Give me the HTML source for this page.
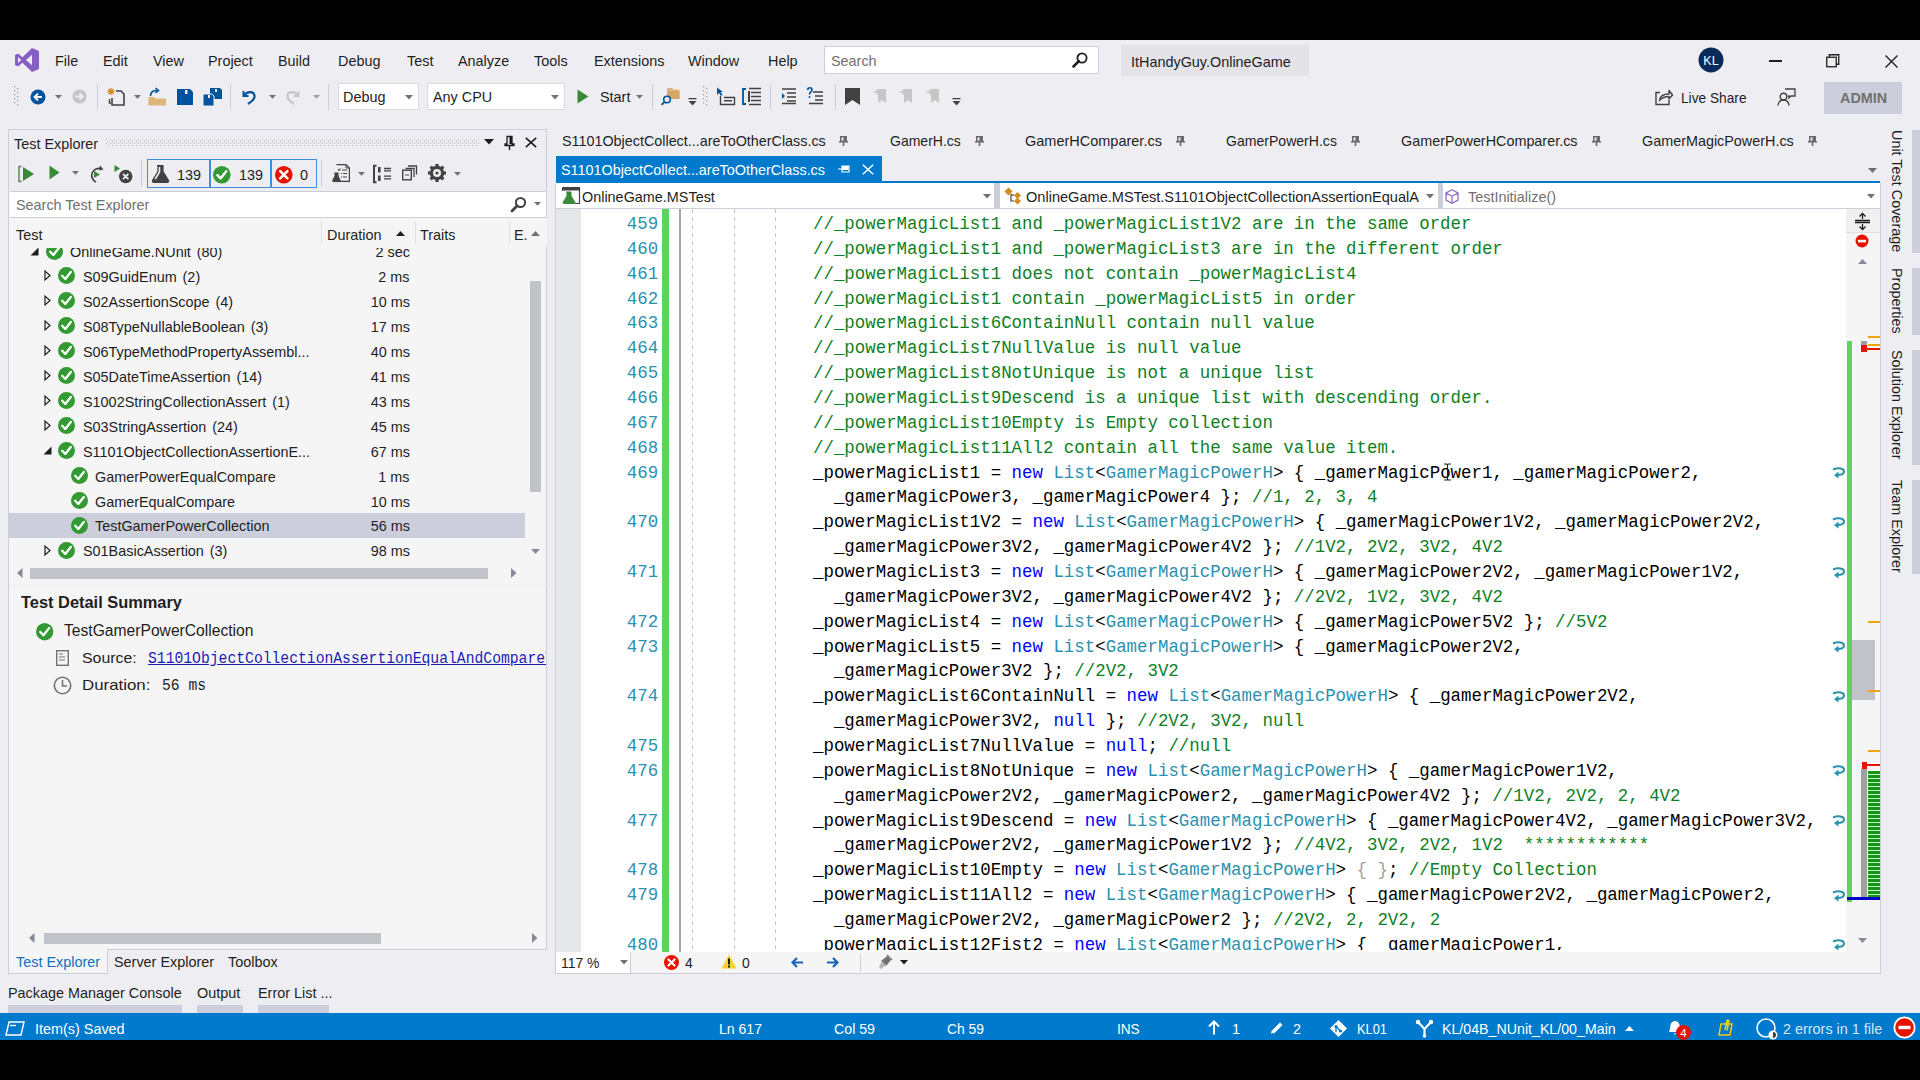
<!DOCTYPE html>
<html><head><meta charset="utf-8">
<style>
*{box-sizing:border-box;margin:0;padding:0}
html,body{width:1920px;height:1080px;overflow:hidden;background:#000}
body{position:relative;font-family:"Liberation Sans",sans-serif;font-size:15px;color:#1E1E1E}
.a{position:absolute}
svg.a{overflow:visible}
.t{position:absolute;white-space:pre;line-height:1}
.code{position:absolute;font-family:"Liberation Mono",monospace;font-size:19px;white-space:pre;line-height:24.864px;color:#000;transform:scaleX(0.91667);transform-origin:0 0}
.cm{color:#0E7F26}.kw{color:#0000FF}.ty{color:#2B91AF}.gr{color:#A0A0A0}
</style></head>
<body>
<div class="a" style="left:0px;top:0px;width:1920px;height:40px;background:#000;"></div>
<div class="a" style="left:0px;top:40px;width:1920px;height:1000px;background:#EEEEF2;"></div>
<div class="a" style="left:0px;top:1040px;width:1920px;height:40px;background:#000;"></div>
<svg class="a" style="left:15px;top:48px;" width="24" height="24" viewBox="0 0 24 24"><path fill-rule="evenodd" fill="#865FC5" d="M17,0 L24,3 L24,21 L17,24 L7.5,14.8 L3,18.5 L0,17 L0,7 L3,5.5 L7.5,9.2 Z M17,6.8 L11,12 L17,17.2 Z M3,9 L3,15 L6.2,12 Z"/></svg>
<div class="t" style="left:54.50px;top:53.30px;font-size:15px;color:#1E1E1E;transform:scaleX(0.96);transform-origin:0 0;">File</div>
<div class="t" style="left:102.50px;top:53.30px;font-size:15px;color:#1E1E1E;transform:scaleX(0.96);transform-origin:0 0;">Edit</div>
<div class="t" style="left:152.50px;top:53.30px;font-size:15px;color:#1E1E1E;transform:scaleX(0.96);transform-origin:0 0;">View</div>
<div class="t" style="left:208.00px;top:53.30px;font-size:15px;color:#1E1E1E;transform:scaleX(0.96);transform-origin:0 0;">Project</div>
<div class="t" style="left:278.00px;top:53.30px;font-size:15px;color:#1E1E1E;transform:scaleX(0.96);transform-origin:0 0;">Build</div>
<div class="t" style="left:337.50px;top:53.30px;font-size:15px;color:#1E1E1E;transform:scaleX(0.96);transform-origin:0 0;">Debug</div>
<div class="t" style="left:407.00px;top:53.30px;font-size:15px;color:#1E1E1E;transform:scaleX(0.96);transform-origin:0 0;">Test</div>
<div class="t" style="left:457.50px;top:53.30px;font-size:15px;color:#1E1E1E;transform:scaleX(0.96);transform-origin:0 0;">Analyze</div>
<div class="t" style="left:533.50px;top:53.30px;font-size:15px;color:#1E1E1E;transform:scaleX(0.96);transform-origin:0 0;">Tools</div>
<div class="t" style="left:593.50px;top:53.30px;font-size:15px;color:#1E1E1E;transform:scaleX(0.96);transform-origin:0 0;">Extensions</div>
<div class="t" style="left:687.50px;top:53.30px;font-size:15px;color:#1E1E1E;transform:scaleX(0.96);transform-origin:0 0;">Window</div>
<div class="t" style="left:767.50px;top:53.30px;font-size:15px;color:#1E1E1E;transform:scaleX(0.96);transform-origin:0 0;">Help</div>
<div class="a" style="left:824px;top:46px;width:275px;height:28px;background:#FFFFFF;border:1px solid #CCCEDB;"></div>
<div class="t" style="left:831.00px;top:53.30px;font-size:15px;color:#717171;transform:scaleX(0.96);transform-origin:0 0;">Search</div>
<svg class="a" style="left:1071px;top:51px;" width="18" height="18" viewBox="0 0 18 18"><circle cx="11" cy="7" r="4.6" fill="none" stroke="#1E1E1E" stroke-width="1.8"/><path d="M7.8,10.2 L2.5,15.5" stroke="#1E1E1E" stroke-width="2.6" stroke-linecap="round"/></svg>
<div class="a" style="left:1121px;top:45px;width:188px;height:31px;background:#E3E3E8;"></div>
<div class="t" style="left:1131.00px;top:54.30px;font-size:15px;color:#1E1E1E;transform:scaleX(0.96);transform-origin:0 0;">ItHandyGuy.OnlineGame</div>
<svg class="a" style="left:1698px;top:47px;" width="26" height="26" viewBox="0 0 26 26"><circle cx="13" cy="13" r="12.5" fill="#0B2A5C"/><text x="13" y="17.6" text-anchor="middle" font-family="Liberation Sans" font-size="12.5" fill="#fff">KL</text></svg>
<div class="a" style="left:1769px;top:60px;width:13px;height:1.5px;background:#1E1E1E;"></div>
<svg class="a" style="left:1826px;top:54px;" width="14" height="14" viewBox="0 0 14 14"><rect x="0.75" y="3.25" width="9.5" height="9.5" fill="none" stroke="#1E1E1E" stroke-width="1.3"/><path d="M3.25,3.25 V0.75 H12.75 V10.25 H10.25" fill="none" stroke="#1E1E1E" stroke-width="1.3"/></svg>
<svg class="a" style="left:1885px;top:55px;" width="13" height="13" viewBox="0 0 13 13"><path d="M0.5,0.5 L12.5,12.5 M12.5,0.5 L0.5,12.5" stroke="#1E1E1E" stroke-width="1.4"/></svg>
<svg class="a" style="left:13px;top:85px;" width="6" height="24" viewBox="0 0 6 24"><rect x="1" y="1" width="1.3" height="1.3" fill="#A0A0A0"/><rect x="4" y="3" width="1.3" height="1.3" fill="#A0A0A0"/><rect x="1" y="5" width="1.3" height="1.3" fill="#A0A0A0"/><rect x="4" y="7" width="1.3" height="1.3" fill="#A0A0A0"/><rect x="1" y="9" width="1.3" height="1.3" fill="#A0A0A0"/><rect x="4" y="11" width="1.3" height="1.3" fill="#A0A0A0"/><rect x="1" y="13" width="1.3" height="1.3" fill="#A0A0A0"/><rect x="4" y="15" width="1.3" height="1.3" fill="#A0A0A0"/><rect x="1" y="17" width="1.3" height="1.3" fill="#A0A0A0"/><rect x="4" y="19" width="1.3" height="1.3" fill="#A0A0A0"/></svg>
<svg class="a" style="left:30px;top:89px;" width="16" height="16" viewBox="0 0 16 16"><circle cx="8" cy="8" r="7.5" fill="#00539C"/><path d="M12,8 H5 M8,4.6 L4.6,8 L8,11.4" fill="none" stroke="#fff" stroke-width="2"/></svg>
<svg class="a" style="left:55.0px;top:95.075px;" width="7" height="3.8500000000000005" viewBox="0 0 7 3.8500000000000005"><path d="M0,0 L7,0 L3.5,3.8500000000000005 Z" fill="#717171"/></svg>
<svg class="a" style="left:72px;top:89px;" width="15" height="15" viewBox="0 0 15 15"><circle cx="7.5" cy="7.5" r="7" fill="#C6C6C6"/><path d="M3.5,7.5 H10.5 M7.5,4.3 L10.7,7.5 L7.5,10.7" fill="none" stroke="#EEEEF2" stroke-width="2"/></svg>
<div class="a" style="left:97px;top:84px;width:1px;height:26px;background:#CCCEDB;"></div>
<svg class="a" style="left:107px;top:87px;" width="19" height="19" viewBox="0 0 19 19"><path d="M4,1 L4,8 M0.5,4.5 L7.5,4.5 M1.5,2 L6.5,7 M6.5,2 L1.5,7" stroke="#D28C1E" stroke-width="1.3"/><path d="M9,4 H14 L17,7 V18 H5 V11" fill="none" stroke="#424242" stroke-width="1.6"/><path d="M2.5,12 V16 H4" stroke="#424242" stroke-width="1.4" fill="none"/></svg>
<svg class="a" style="left:134.0px;top:95.075px;" width="7" height="3.8500000000000005" viewBox="0 0 7 3.8500000000000005"><path d="M0,0 L7,0 L3.5,3.8500000000000005 Z" fill="#717171"/></svg>
<svg class="a" style="left:148px;top:88px;" width="19" height="18" viewBox="0 0 19 18"><path d="M0.5,9 H6 L7.5,10.5 H18 V17.5 H0.5 Z" fill="#DCB67A"/><path d="M2.5,8 C2.5,4 5,2.5 9,2.5" fill="none" stroke="#00539C" stroke-width="1.6"/><path d="M7.5,0 L10.5,2.5 L7.5,5" fill="none" stroke="#00539C" stroke-width="1.6"/></svg>
<svg class="a" style="left:177px;top:89px;" width="16" height="16" viewBox="0 0 16 16"><path d="M0,0 H13 L16,3 V16 H0 Z" fill="#00539C"/><rect x="8" y="1" width="2.5" height="4" fill="#EEEEF2"/><rect x="3" y="10" width="10" height="6" fill="#00539C"/></svg>
<svg class="a" style="left:203px;top:88px;" width="19" height="18" viewBox="0 0 19 18"><path d="M7,0 H17 L19,2 V11 H7 Z" fill="#00539C"/><rect x="12" y="1" width="2" height="3" fill="#EEEEF2"/><path d="M0,6 H9 L11,8 V18 H0 Z" fill="#00539C" stroke="#EEEEF2" stroke-width="1"/><rect x="5" y="7" width="2" height="3" fill="#EEEEF2"/></svg>
<div class="a" style="left:230px;top:84px;width:1px;height:26px;background:#CCCEDB;"></div>
<svg class="a" style="left:241px;top:88px;" width="16" height="17" viewBox="0 0 16 17"><path d="M2.5,3 V8 H7.5" fill="none" stroke="#00539C" stroke-width="2"/><path d="M3,7.5 C6,3 13,3 13.5,8 C14,11 11,13 7,16" fill="none" stroke="#00539C" stroke-width="2.2"/></svg>
<svg class="a" style="left:269.0px;top:95.075px;" width="7" height="3.8500000000000005" viewBox="0 0 7 3.8500000000000005"><path d="M0,0 L7,0 L3.5,3.8500000000000005 Z" fill="#717171"/></svg>
<svg class="a" style="left:285px;top:88px;" width="16" height="17" viewBox="0 0 16 17"><path d="M13.5,3 V8 H8.5" fill="none" stroke="#C6C6C6" stroke-width="2"/><path d="M13,7.5 C10,3 3,3 2.5,8 C2,11 5,13 9,16" fill="none" stroke="#C6C6C6" stroke-width="2.2"/></svg>
<svg class="a" style="left:312.5px;top:95.075px;" width="7" height="3.8500000000000005" viewBox="0 0 7 3.8500000000000005"><path d="M0,0 L7,0 L3.5,3.8500000000000005 Z" fill="#A0A0A0"/></svg>
<div class="a" style="left:328px;top:84px;width:1px;height:26px;background:#CCCEDB;"></div>
<div class="a" style="left:338px;top:83px;width:81px;height:27px;background:#FFFFFF;border:1px solid #D9DAE3;"></div>
<div class="t" style="left:343.00px;top:89.30px;font-size:15px;color:#1E1E1E;transform:scaleX(0.96);transform-origin:0 0;">Debug</div>
<svg class="a" style="left:405.0px;top:94.8px;" width="8" height="4.4" viewBox="0 0 8 4.4"><path d="M0,0 L8,0 L4.0,4.4 Z" fill="#717171"/></svg>
<div class="a" style="left:427px;top:83px;width:138px;height:27px;background:#FFFFFF;border:1px solid #D9DAE3;"></div>
<div class="t" style="left:432.50px;top:89.30px;font-size:15px;color:#1E1E1E;transform:scaleX(0.96);transform-origin:0 0;">Any CPU</div>
<svg class="a" style="left:551.0px;top:94.8px;" width="8" height="4.4" viewBox="0 0 8 4.4"><path d="M0,0 L8,0 L4.0,4.4 Z" fill="#717171"/></svg>
<svg class="a" style="left:577px;top:89px;" width="12" height="15" viewBox="0 0 12 15"><path d="M0.5,0.5 L11.5,7.5 L0.5,14.5 Z" fill="#388A34"/></svg>
<div class="t" style="left:599.50px;top:89.30px;font-size:15px;color:#1E1E1E;transform:scaleX(0.96);transform-origin:0 0;">Start</div>
<svg class="a" style="left:636.0px;top:95.075px;" width="7" height="3.8500000000000005" viewBox="0 0 7 3.8500000000000005"><path d="M0,0 L7,0 L3.5,3.8500000000000005 Z" fill="#717171"/></svg>
<div class="a" style="left:651.5px;top:84px;width:1px;height:26px;background:#CCCEDB;"></div>
<svg class="a" style="left:661px;top:87px;" width="19" height="19" viewBox="0 0 19 19"><path d="M6,1 H11 L12.5,2.5 H18.5 V12 H6 Z" fill="#DCB67A"/><path d="M6,4 H18.5 V12 H6 Z" fill="#C99A4F" opacity="0.5"/><circle cx="6" cy="12.5" r="3.3" fill="#EEEEF2" stroke="#00539C" stroke-width="1.6"/><path d="M3.6,14.9 L0.6,17.9" stroke="#00539C" stroke-width="2"/></svg>
<svg class="a" style="left:688px;top:98px;" width="9" height="9" viewBox="0 0 9 9"><rect x="0.5" y="0" width="8" height="1.3" fill="#424242"/><path d="M0.5,3 H8.5 L4.5,7.5 Z" fill="#424242"/></svg>
<svg class="a" style="left:702px;top:85px;" width="6" height="24" viewBox="0 0 6 24"><rect x="1" y="1" width="1.3" height="1.3" fill="#A0A0A0"/><rect x="4" y="3" width="1.3" height="1.3" fill="#A0A0A0"/><rect x="1" y="5" width="1.3" height="1.3" fill="#A0A0A0"/><rect x="4" y="7" width="1.3" height="1.3" fill="#A0A0A0"/><rect x="1" y="9" width="1.3" height="1.3" fill="#A0A0A0"/><rect x="4" y="11" width="1.3" height="1.3" fill="#A0A0A0"/><rect x="1" y="13" width="1.3" height="1.3" fill="#A0A0A0"/><rect x="4" y="15" width="1.3" height="1.3" fill="#A0A0A0"/><rect x="1" y="17" width="1.3" height="1.3" fill="#A0A0A0"/><rect x="4" y="19" width="1.3" height="1.3" fill="#A0A0A0"/></svg>
<svg class="a" style="left:716px;top:87px;" width="19" height="19" viewBox="0 0 19 19"><path d="M1,0.5 L1,8 L3,6 L5,9 L6.5,8 L4.5,5 L7,5 Z" fill="#00539C"/><path d="M4.5,9 V17.5 H18.5 V10.5 H8" fill="none" stroke="#424242" stroke-width="1.4"/><rect x="8" y="13" width="8" height="1.5" fill="#424242"/></svg>
<svg class="a" style="left:742px;top:87px;" width="20" height="19" viewBox="0 0 20 19"><path d="M4,2 H1 V17 H4" fill="none" stroke="#00539C" stroke-width="1.8"/><path d="M7,1.5 H19 M9,5.5 H19 M9,9.5 H19 M9,13.5 H19 M7,17.5 H19" stroke="#424242" stroke-width="1.5"/><rect x="6" y="4" width="2" height="11" fill="#424242"/></svg>
<div class="a" style="left:770px;top:84px;width:1px;height:26px;background:#CCCEDB;"></div>
<svg class="a" style="left:782px;top:88px;" width="15" height="16" viewBox="0 0 15 16"><path d="M0,1 H14 M5,5 H14 M5,9 H14 M5,13 H14 M0,15.5 H14" stroke="#424242" stroke-width="1.5"/><path d="M0,5 L3,8 L0,11 Z" fill="#00539C"/></svg>
<svg class="a" style="left:806px;top:87px;" width="17" height="17" viewBox="0 0 17 17"><path d="M1.5,3 C2,0 6,0 6,3 C6,5 3.5,5 3.5,7.5" fill="none" stroke="#00539C" stroke-width="1.6"/><circle cx="3.5" cy="10" r="1" fill="#00539C"/><path d="M7,5 H17 M9,9 H17 M9,13 H17 M3,16.5 H17" stroke="#424242" stroke-width="1.5"/></svg>
<div class="a" style="left:834.5px;top:84px;width:1px;height:26px;background:#CCCEDB;"></div>
<svg class="a" style="left:845px;top:88px;" width="15" height="17" viewBox="0 0 15 17"><path d="M0,0 H15 V17 L7.5,12 L0,17 Z" fill="#424242"/></svg>
<svg class="a" style="left:873px;top:88px;" width="16" height="16" viewBox="0 0 16 16"><path d="M5,1 H13 V15 L9,12 L5,15 Z" fill="#C6C6C6"/><path d="M0.5,4 H6 M3.5,1.5 L6,4 L3.5,6.5" stroke="#C6C6C6" stroke-width="1.5" fill="none"/></svg>
<svg class="a" style="left:899px;top:88px;" width="16" height="16" viewBox="0 0 16 16"><path d="M5,1 H13 V15 L9,12 L5,15 Z" fill="#C6C6C6"/><path d="M0.5,4 H6 M3.5,1.5 L6,4 L3.5,6.5" stroke="#C6C6C6" stroke-width="1.5" fill="none"/></svg>
<svg class="a" style="left:926px;top:88px;" width="16" height="16" viewBox="0 0 16 16"><path d="M5,1 H13 V15 L9,12 L5,15 Z" fill="#C6C6C6"/><path d="M0.5,4 H6 M3.5,1.5 L6,4 L3.5,6.5" stroke="#C6C6C6" stroke-width="1.5" fill="none"/></svg>
<svg class="a" style="left:952px;top:98px;" width="9" height="9" viewBox="0 0 9 9"><rect x="0.5" y="0" width="8" height="1.3" fill="#424242"/><path d="M0.5,3 H8.5 L4.5,7.5 Z" fill="#424242"/></svg>
<svg class="a" style="left:1655px;top:88px;" width="18" height="18" viewBox="0 0 18 18"><path d="M5,4.5 H1 V16.5 H14 V12" fill="none" stroke="#424242" stroke-width="1.4"/><path d="M4.5,12.5 C5,7.5 9,6 14,6 V2.5 L17.5,7 L14,11 V8.5 C10,8.5 7,9.5 4.5,12.5 Z" fill="none" stroke="#424242" stroke-width="1.4" stroke-linejoin="round"/></svg>
<div class="t" id="f0" style="left:1680.50px;top:90.30px;font-size:15px;color:#1E1E1E;transform:scaleX(0.9133);transform-origin:0 0;">Live Share</div>
<svg class="a" style="left:1777px;top:88px;" width="19" height="19" viewBox="0 0 19 19"><circle cx="6.5" cy="8.5" r="3.3" fill="none" stroke="#424242" stroke-width="1.4"/><path d="M0.8,17.5 C1.5,13 4,12 6.5,12 C9,12 11.5,13 12,17.5" fill="none" stroke="#424242" stroke-width="1.4"/><path d="M8,1 H18 V8 H14 L12,10 V8 H11" fill="none" stroke="#424242" stroke-width="1.3"/></svg>
<div class="a" style="left:1824px;top:82px;width:78px;height:32px;background:#CCCEDB;"></div>
<div class="t" style="left:1839.50px;top:90.30px;font-size:15px;color:#717171;font-weight:bold;transform:scaleX(0.96);transform-origin:0 0;">ADMIN</div>
<div class="a" style="left:8px;top:129px;width:539px;height:821px;background:#F5F5F5;border:1px solid #CCCEDB;"></div>
<div class="a" style="left:9px;top:130px;width:537px;height:61px;background:#EEEEF2;"></div>
<div class="t" style="left:14.00px;top:136.29px;font-size:15px;color:#1E1E1E;transform:scaleX(0.96);transform-origin:0 0;">Test Explorer</div>
<svg class="a" style="left:106px;top:139px;" width="374" height="8" viewBox="0 0 374 8"><defs><pattern id="gp" width="4" height="4" patternUnits="userSpaceOnUse"><rect x="0" y="0" width="1" height="1" fill="#B0B0B8"/><rect x="2" y="2" width="1" height="1" fill="#B0B0B8"/></pattern></defs><rect width="374" height="8" fill="url(#gp)"/></svg>
<svg class="a" style="left:484.0px;top:139.25px;" width="10" height="5.5" viewBox="0 0 10 5.5"><path d="M0,0 L10,0 L5.0,5.5 Z" fill="#1E1E1E"/></svg>
<svg class="a" style="left:504px;top:136px;" width="11" height="14" viewBox="0 0 11 14"><path d="M3,0.5 H8 V8 H10 V9.5 H1 V8 H3 Z" fill="none" stroke="#1E1E1E" stroke-width="1.3"/><path d="M5.5,9.5 V14" stroke="#1E1E1E" stroke-width="1.4"/><rect x="5.5" y="1" width="2.5" height="7" fill="#1E1E1E"/></svg>
<svg class="a" style="left:525px;top:137px;" width="12" height="11" viewBox="0 0 12 11"><path d="M0.8,0.8 L11.2,10.2 M11.2,0.8 L0.8,10.2" stroke="#1E1E1E" stroke-width="1.6"/></svg>
<svg class="a" style="left:18px;top:166px;" width="17" height="16" viewBox="0 0 17 16"><path d="M3.5,0.5 H1 V15.5 H3.5" fill="none" stroke="#5B7A56" stroke-width="1.4"/><path d="M5,1 L16,8 L5,15 Z" fill="#388A34"/></svg>
<svg class="a" style="left:49px;top:165px;" width="11" height="15" viewBox="0 0 11 15"><path d="M0.5,0.5 L10.5,7.5 L0.5,14.5 Z" fill="#388A34"/></svg>
<svg class="a" style="left:72.2px;top:171.075px;" width="7" height="3.8500000000000005" viewBox="0 0 7 3.8500000000000005"><path d="M0,0 L7,0 L3.5,3.8500000000000005 Z" fill="#717171"/></svg>
<svg class="a" style="left:87px;top:165px;" width="18" height="18" viewBox="0 0 18 18"><path d="M14.5,4 A7,7 0 1 0 9,17" fill="none" stroke="#424242" stroke-width="1.6"/><path d="M13,0.5 L16.5,4.5 L12,5.5 Z" fill="#424242"/><path d="M7,6 L13,9.5 L7,13 Z" fill="#388A34"/></svg>
<svg class="a" style="left:114px;top:165px;" width="19" height="19" viewBox="0 0 19 19"><path d="M0.5,0 L6,3.5 L0.5,7 Z" fill="#388A34"/><circle cx="11.7" cy="11.5" r="6.7" fill="#424242"/><path d="M9,8.8 L14.4,14.2 M14.4,8.8 L9,14.2" stroke="#EEEEF2" stroke-width="1.8"/></svg>
<div class="a" style="left:141px;top:160px;width:1px;height:26px;background:#CCCEDB;"></div>
<div class="a" style="left:147px;top:159px;width:170px;height:29px;border:1.5px solid #3D8EE0;"></div>
<div class="a" style="left:208.5px;top:159px;width:2px;height:29px;background:#3D8EE0;"></div>
<div class="a" style="left:270px;top:159px;width:2px;height:29px;background:#3D8EE0;"></div>
<svg class="a" style="left:152px;top:165px;" width="17" height="18" viewBox="0 0 17 18"><path d="M5,0.5 H11.5 M6,1 V6.5 L0.5,15.5 Q0,17.5 2,17.5 H15 Q17,17.5 16.5,15.5 L11,6.5 V1" fill="#424242" stroke="#424242" stroke-width="1.2"/><path d="M7.5,2 V7 L3.2,14" fill="none" stroke="#EEEEF2" stroke-width="1.6"/></svg>
<div class="t" style="left:176.50px;top:167.29px;font-size:15px;color:#1E1E1E;transform:scaleX(0.96);transform-origin:0 0;">139</div>
<svg class="a" style="left:213.2px;top:165.5px;" width="17.6" height="17.6" viewBox="0 0 17.6 17.6"><g transform="scale(1.0353)"><circle cx="8.5" cy="8.5" r="8.5" fill="#339933"/><path d="M4.2,8.8 L7.3,12 L12.8,5" fill="none" stroke="#fff" stroke-width="2.3" stroke-linecap="round" stroke-linejoin="round"/></g></svg>
<div class="t" style="left:239.00px;top:167.29px;font-size:15px;color:#1E1E1E;transform:scaleX(0.96);transform-origin:0 0;">139</div>
<svg class="a" style="left:275.2px;top:165.7px;" width="17.6" height="17.6" viewBox="0 0 17.6 17.6"><g transform="scale(1.0353)"><circle cx="8.5" cy="8.5" r="8.5" fill="#E51400"/><path d="M5,5 L12,12 M12,5 L5,12" stroke="#fff" stroke-width="2.4" stroke-linecap="round"/></g></svg>
<div class="t" style="left:300.00px;top:167.29px;font-size:15px;color:#1E1E1E;transform:scaleX(0.96);transform-origin:0 0;">0</div>
<div class="a" style="left:321px;top:160px;width:1px;height:26px;background:#CCCEDB;"></div>
<svg class="a" style="left:332px;top:164px;" width="19" height="19" viewBox="0 0 19 19"><path d="M4.6,0.6 H14 L17.4,4 V17.4 H7" fill="#EEEEF2" stroke="#424242" stroke-width="1.2"/><path d="M14,0.6 V4 H17.4" fill="none" stroke="#424242" stroke-width="1"/><path d="M6,5.5 L7,6.5 L8.5,4.5 M10,6 H15 M9,9.5 H10 M11,9.5 H15 M9,13 H10 M11,13 H15" fill="none" stroke="#424242" stroke-width="1.1"/><path d="M2.3,9 H6.5 M3,9 V12 L0.6,16.5 Q0.4,17.6 1.5,17.6 H7.5 Q8.6,17.6 8.3,16.5 L6,12 V9" fill="#424242" stroke="#424242" stroke-width="1"/></svg>
<svg class="a" style="left:357.5px;top:172.075px;" width="7" height="3.8500000000000005" viewBox="0 0 7 3.8500000000000005"><path d="M0,0 L7,0 L3.5,3.8500000000000005 Z" fill="#717171"/></svg>
<svg class="a" style="left:373px;top:165px;" width="19" height="18" viewBox="0 0 19 18"><path d="M3.5,0.8 H1 V17.2 H3.5" fill="none" stroke="#424242" stroke-width="2"/><rect x="5" y="2" width="2.6" height="5.5" fill="#424242"/><rect x="5" y="10.5" width="2.6" height="5.5" fill="#424242"/><path d="M11,3.5 H18 M11,5.8 H18 M11,11.2 H18 M11,13.8 H18" stroke="#424242" stroke-width="1.3"/></svg>
<svg class="a" style="left:402px;top:165px;" width="16" height="16" viewBox="0 0 16 16"><path d="M6,1 H14.5 V9.5" fill="none" stroke="#424242" stroke-width="1.3"/><path d="M3.5,3.5 H12 V12" fill="none" stroke="#424242" stroke-width="1.3"/><rect x="0.7" y="5.2" width="8.6" height="9.6" fill="#EEEEF2" stroke="#424242" stroke-width="1.4"/><path d="M3,10 H7" stroke="#717171" stroke-width="1.3"/></svg>
<svg class="a" style="left:428px;top:164px;" width="18" height="18" viewBox="0 0 18 18"><g transform="translate(9,9)"><rect x="-1.6" y="-9" width="3.2" height="4" fill="#424242" transform="rotate(0)"/><rect x="-1.6" y="-9" width="3.2" height="4" fill="#424242" transform="rotate(45)"/><rect x="-1.6" y="-9" width="3.2" height="4" fill="#424242" transform="rotate(90)"/><rect x="-1.6" y="-9" width="3.2" height="4" fill="#424242" transform="rotate(135)"/><rect x="-1.6" y="-9" width="3.2" height="4" fill="#424242" transform="rotate(180)"/><rect x="-1.6" y="-9" width="3.2" height="4" fill="#424242" transform="rotate(225)"/><rect x="-1.6" y="-9" width="3.2" height="4" fill="#424242" transform="rotate(270)"/><rect x="-1.6" y="-9" width="3.2" height="4" fill="#424242" transform="rotate(315)"/><circle r="5.6" fill="none" stroke="#424242" stroke-width="3.2"/><circle r="1.6" fill="#424242"/></g></svg>
<svg class="a" style="left:453.5px;top:172.075px;" width="7" height="3.8500000000000005" viewBox="0 0 7 3.8500000000000005"><path d="M0,0 L7,0 L3.5,3.8500000000000005 Z" fill="#717171"/></svg>
<div class="a" style="left:10px;top:191px;width:536px;height:27px;background:#FFFFFF;border-top:1px solid #CCCEDB;border-bottom:1px solid #CCCEDB;"></div>
<div class="t" style="left:15.50px;top:197.29px;font-size:15px;color:#717171;transform:scaleX(0.96);transform-origin:0 0;">Search Test Explorer</div>
<svg class="a" style="left:510px;top:196px;" width="17" height="17" viewBox="0 0 17 17"><circle cx="10.5" cy="6.5" r="4.6" fill="none" stroke="#424242" stroke-width="2"/><path d="M7.2,9.8 L2,15" stroke="#424242" stroke-width="2.8" stroke-linecap="round"/></svg>
<svg class="a" style="left:533.5px;top:202.075px;" width="7" height="3.8500000000000005" viewBox="0 0 7 3.8500000000000005"><path d="M0,0 L7,0 L3.5,3.8500000000000005 Z" fill="#717171"/></svg>
<div class="a" style="left:9px;top:218px;width:538px;height:28px;background:#F5F5F5;"></div>
<div class="t" style="left:16.00px;top:227.29px;font-size:15px;color:#1E1E1E;transform:scaleX(0.96);transform-origin:0 0;">Test</div>
<div class="a" style="left:321px;top:221px;width:1px;height:24px;background:#E0E0E6;"></div>
<div class="t" style="left:327.00px;top:227.29px;font-size:15px;color:#1E1E1E;transform:scaleX(0.96);transform-origin:0 0;">Duration</div>
<svg class="a" style="left:396.0px;top:230.525px;" width="9" height="4.95" viewBox="0 0 9 4.95"><path d="M0,4.95 L9,4.95 L4.5,0 Z" fill="#1E1E1E"/></svg>
<div class="a" style="left:415px;top:221px;width:1px;height:24px;background:#E0E0E6;"></div>
<div class="t" style="left:420.00px;top:227.29px;font-size:15px;color:#1E1E1E;transform:scaleX(0.96);transform-origin:0 0;">Traits</div>
<div class="a" style="left:509px;top:221px;width:1px;height:24px;background:#E0E0E6;"></div>
<div class="t" style="left:514.00px;top:227.29px;font-size:15px;color:#1E1E1E;transform:scaleX(0.96);transform-origin:0 0;">E.</div>
<svg class="a" style="left:530.5px;top:230.525px;" width="9" height="4.95" viewBox="0 0 9 4.95"><path d="M0,4.95 L9,4.95 L4.5,0 Z" fill="#717171"/></svg>
<div class="a" style="left:9px;top:247.5px;width:516px;height:315.5px;overflow:hidden">
<svg class="a" style="left:20.5px;top:-1.0px;" width="9" height="9" viewBox="0 0 9 9"><path d="M8.5,0.5 L8.5,8.5 L0.5,8.5 Z" fill="#1E1E1E"/></svg>
<svg class="a" style="left:36.5px;top:-5.0px;" width="17.0" height="17.0" viewBox="0 0 17.0 17.0"><g transform="scale(1.0000)"><circle cx="8.5" cy="8.5" r="8.5" fill="#339933"/><path d="M4.2,8.8 L7.3,12 L12.8,5" fill="none" stroke="#fff" stroke-width="2.3" stroke-linecap="round" stroke-linejoin="round"/></g></svg>
<div class="t" style="left:61.20px;top:-3.21px;font-size:15px;color:#1E1E1E;word-spacing:2px;transform:scaleX(0.96);transform-origin:0 0;">OnlineGame.NUnit (80)</div>
<div class="t" style="right:115.50px;top:-3.21px;font-size:15px;color:#1E1E1E;transform:scaleX(0.96);transform-origin:100% 0;">2 sec</div>
<svg class="a" style="left:35.0px;top:22.920000000000016px;" width="7" height="11" viewBox="0 0 7 11"><path d="M1,1 L1,10 L6,5.5 Z" fill="none" stroke="#1E1E1E" stroke-width="1.2"/></svg>
<svg class="a" style="left:49.2px;top:19.920000000000016px;" width="17.0" height="17.0" viewBox="0 0 17.0 17.0"><g transform="scale(1.0000)"><circle cx="8.5" cy="8.5" r="8.5" fill="#339933"/><path d="M4.2,8.8 L7.3,12 L12.8,5" fill="none" stroke="#fff" stroke-width="2.3" stroke-linecap="round" stroke-linejoin="round"/></g></svg>
<div class="t" style="left:74.00px;top:21.72px;font-size:15px;color:#1E1E1E;word-spacing:2px;transform:scaleX(0.96);transform-origin:0 0;">S09GuidEnum (2)</div>
<div class="t" style="right:115.50px;top:21.72px;font-size:15px;color:#1E1E1E;transform:scaleX(0.96);transform-origin:100% 0;">2 ms</div>
<svg class="a" style="left:35.0px;top:47.84000000000003px;" width="7" height="11" viewBox="0 0 7 11"><path d="M1,1 L1,10 L6,5.5 Z" fill="none" stroke="#1E1E1E" stroke-width="1.2"/></svg>
<svg class="a" style="left:49.2px;top:44.84000000000003px;" width="17.0" height="17.0" viewBox="0 0 17.0 17.0"><g transform="scale(1.0000)"><circle cx="8.5" cy="8.5" r="8.5" fill="#339933"/><path d="M4.2,8.8 L7.3,12 L12.8,5" fill="none" stroke="#fff" stroke-width="2.3" stroke-linecap="round" stroke-linejoin="round"/></g></svg>
<div class="t" style="left:74.00px;top:46.64px;font-size:15px;color:#1E1E1E;word-spacing:2px;transform:scaleX(0.96);transform-origin:0 0;">S02AssertionScope (4)</div>
<div class="t" style="right:115.50px;top:46.64px;font-size:15px;color:#1E1E1E;transform:scaleX(0.96);transform-origin:100% 0;">10 ms</div>
<svg class="a" style="left:35.0px;top:72.75999999999999px;" width="7" height="11" viewBox="0 0 7 11"><path d="M1,1 L1,10 L6,5.5 Z" fill="none" stroke="#1E1E1E" stroke-width="1.2"/></svg>
<svg class="a" style="left:49.2px;top:69.75999999999999px;" width="17.0" height="17.0" viewBox="0 0 17.0 17.0"><g transform="scale(1.0000)"><circle cx="8.5" cy="8.5" r="8.5" fill="#339933"/><path d="M4.2,8.8 L7.3,12 L12.8,5" fill="none" stroke="#fff" stroke-width="2.3" stroke-linecap="round" stroke-linejoin="round"/></g></svg>
<div class="t" style="left:74.00px;top:71.55px;font-size:15px;color:#1E1E1E;word-spacing:2px;transform:scaleX(0.96);transform-origin:0 0;">S08TypeNullableBoolean (3)</div>
<div class="t" style="right:115.50px;top:71.55px;font-size:15px;color:#1E1E1E;transform:scaleX(0.96);transform-origin:100% 0;">17 ms</div>
<svg class="a" style="left:35.0px;top:97.68px;" width="7" height="11" viewBox="0 0 7 11"><path d="M1,1 L1,10 L6,5.5 Z" fill="none" stroke="#1E1E1E" stroke-width="1.2"/></svg>
<svg class="a" style="left:49.2px;top:94.68px;" width="17.0" height="17.0" viewBox="0 0 17.0 17.0"><g transform="scale(1.0000)"><circle cx="8.5" cy="8.5" r="8.5" fill="#339933"/><path d="M4.2,8.8 L7.3,12 L12.8,5" fill="none" stroke="#fff" stroke-width="2.3" stroke-linecap="round" stroke-linejoin="round"/></g></svg>
<div class="t" style="left:74.00px;top:96.48px;font-size:15px;color:#1E1E1E;word-spacing:2px;transform:scaleX(0.96);transform-origin:0 0;">S06TypeMethodPropertyAssembl...</div>
<div class="t" style="right:115.50px;top:96.48px;font-size:15px;color:#1E1E1E;transform:scaleX(0.96);transform-origin:100% 0;">40 ms</div>
<svg class="a" style="left:35.0px;top:122.60000000000002px;" width="7" height="11" viewBox="0 0 7 11"><path d="M1,1 L1,10 L6,5.5 Z" fill="none" stroke="#1E1E1E" stroke-width="1.2"/></svg>
<svg class="a" style="left:49.2px;top:119.60000000000002px;" width="17.0" height="17.0" viewBox="0 0 17.0 17.0"><g transform="scale(1.0000)"><circle cx="8.5" cy="8.5" r="8.5" fill="#339933"/><path d="M4.2,8.8 L7.3,12 L12.8,5" fill="none" stroke="#fff" stroke-width="2.3" stroke-linecap="round" stroke-linejoin="round"/></g></svg>
<div class="t" style="left:74.00px;top:121.40px;font-size:15px;color:#1E1E1E;word-spacing:2px;transform:scaleX(0.96);transform-origin:0 0;">S05DateTimeAssertion (14)</div>
<div class="t" style="right:115.50px;top:121.40px;font-size:15px;color:#1E1E1E;transform:scaleX(0.96);transform-origin:100% 0;">41 ms</div>
<svg class="a" style="left:35.0px;top:147.51999999999998px;" width="7" height="11" viewBox="0 0 7 11"><path d="M1,1 L1,10 L6,5.5 Z" fill="none" stroke="#1E1E1E" stroke-width="1.2"/></svg>
<svg class="a" style="left:49.2px;top:144.51999999999998px;" width="17.0" height="17.0" viewBox="0 0 17.0 17.0"><g transform="scale(1.0000)"><circle cx="8.5" cy="8.5" r="8.5" fill="#339933"/><path d="M4.2,8.8 L7.3,12 L12.8,5" fill="none" stroke="#fff" stroke-width="2.3" stroke-linecap="round" stroke-linejoin="round"/></g></svg>
<div class="t" style="left:74.00px;top:146.31px;font-size:15px;color:#1E1E1E;word-spacing:2px;transform:scaleX(0.96);transform-origin:0 0;">S1002StringCollectionAssert (1)</div>
<div class="t" style="right:115.50px;top:146.31px;font-size:15px;color:#1E1E1E;transform:scaleX(0.96);transform-origin:100% 0;">43 ms</div>
<svg class="a" style="left:35.0px;top:172.44px;" width="7" height="11" viewBox="0 0 7 11"><path d="M1,1 L1,10 L6,5.5 Z" fill="none" stroke="#1E1E1E" stroke-width="1.2"/></svg>
<svg class="a" style="left:49.2px;top:169.44px;" width="17.0" height="17.0" viewBox="0 0 17.0 17.0"><g transform="scale(1.0000)"><circle cx="8.5" cy="8.5" r="8.5" fill="#339933"/><path d="M4.2,8.8 L7.3,12 L12.8,5" fill="none" stroke="#fff" stroke-width="2.3" stroke-linecap="round" stroke-linejoin="round"/></g></svg>
<div class="t" style="left:74.00px;top:171.23px;font-size:15px;color:#1E1E1E;word-spacing:2px;transform:scaleX(0.96);transform-origin:0 0;">S03StringAssertion (24)</div>
<div class="t" style="right:115.50px;top:171.23px;font-size:15px;color:#1E1E1E;transform:scaleX(0.96);transform-origin:100% 0;">45 ms</div>
<svg class="a" style="left:34.0px;top:198.36px;" width="9" height="9" viewBox="0 0 9 9"><path d="M8.5,0.5 L8.5,8.5 L0.5,8.5 Z" fill="#1E1E1E"/></svg>
<svg class="a" style="left:49.2px;top:194.36px;" width="17.0" height="17.0" viewBox="0 0 17.0 17.0"><g transform="scale(1.0000)"><circle cx="8.5" cy="8.5" r="8.5" fill="#339933"/><path d="M4.2,8.8 L7.3,12 L12.8,5" fill="none" stroke="#fff" stroke-width="2.3" stroke-linecap="round" stroke-linejoin="round"/></g></svg>
<div class="t" style="left:74.00px;top:196.16px;font-size:15px;color:#1E1E1E;word-spacing:2px;transform:scaleX(0.96);transform-origin:0 0;">S1101ObjectCollectionAssertionE...</div>
<div class="t" style="right:115.50px;top:196.16px;font-size:15px;color:#1E1E1E;transform:scaleX(0.96);transform-origin:100% 0;">67 ms</div>
<svg class="a" style="left:61.5px;top:219.28000000000003px;" width="17.0" height="17.0" viewBox="0 0 17.0 17.0"><g transform="scale(1.0000)"><circle cx="8.5" cy="8.5" r="8.5" fill="#339933"/><path d="M4.2,8.8 L7.3,12 L12.8,5" fill="none" stroke="#fff" stroke-width="2.3" stroke-linecap="round" stroke-linejoin="round"/></g></svg>
<div class="t" style="left:86.40px;top:221.08px;font-size:15px;color:#1E1E1E;word-spacing:2px;transform:scaleX(0.96);transform-origin:0 0;">GamerPowerEqualCompare</div>
<div class="t" style="right:115.50px;top:221.08px;font-size:15px;color:#1E1E1E;transform:scaleX(0.96);transform-origin:100% 0;">1 ms</div>
<svg class="a" style="left:61.5px;top:244.20000000000005px;" width="17.0" height="17.0" viewBox="0 0 17.0 17.0"><g transform="scale(1.0000)"><circle cx="8.5" cy="8.5" r="8.5" fill="#339933"/><path d="M4.2,8.8 L7.3,12 L12.8,5" fill="none" stroke="#fff" stroke-width="2.3" stroke-linecap="round" stroke-linejoin="round"/></g></svg>
<div class="t" style="left:86.40px;top:246.00px;font-size:15px;color:#1E1E1E;word-spacing:2px;transform:scaleX(0.96);transform-origin:0 0;">GamerEqualCompare</div>
<div class="t" style="right:115.50px;top:246.00px;font-size:15px;color:#1E1E1E;transform:scaleX(0.96);transform-origin:100% 0;">10 ms</div>
<div class="a" style="left:0px;top:265px;width:516px;height:25px;background:#CCCEDB;"></div>
<svg class="a" style="left:61.5px;top:269.12px;" width="17.0" height="17.0" viewBox="0 0 17.0 17.0"><g transform="scale(1.0000)"><circle cx="8.5" cy="8.5" r="8.5" fill="#339933"/><path d="M4.2,8.8 L7.3,12 L12.8,5" fill="none" stroke="#fff" stroke-width="2.3" stroke-linecap="round" stroke-linejoin="round"/></g></svg>
<div class="t" style="left:86.40px;top:270.92px;font-size:15px;color:#1E1E1E;word-spacing:2px;transform:scaleX(0.96);transform-origin:0 0;">TestGamerPowerCollection</div>
<div class="t" style="right:115.50px;top:270.92px;font-size:15px;color:#1E1E1E;transform:scaleX(0.96);transform-origin:100% 0;">56 ms</div>
<svg class="a" style="left:35.0px;top:297.03999999999996px;" width="7" height="11" viewBox="0 0 7 11"><path d="M1,1 L1,10 L6,5.5 Z" fill="none" stroke="#1E1E1E" stroke-width="1.2"/></svg>
<svg class="a" style="left:49.2px;top:294.03999999999996px;" width="17.0" height="17.0" viewBox="0 0 17.0 17.0"><g transform="scale(1.0000)"><circle cx="8.5" cy="8.5" r="8.5" fill="#339933"/><path d="M4.2,8.8 L7.3,12 L12.8,5" fill="none" stroke="#fff" stroke-width="2.3" stroke-linecap="round" stroke-linejoin="round"/></g></svg>
<div class="t" style="left:74.00px;top:295.83px;font-size:15px;color:#1E1E1E;word-spacing:2px;transform:scaleX(0.96);transform-origin:0 0;">S01BasicAssertion (3)</div>
<div class="t" style="right:115.50px;top:295.83px;font-size:15px;color:#1E1E1E;transform:scaleX(0.96);transform-origin:100% 0;">98 ms</div>
</div>
<div class="a" style="left:530px;top:281px;width:11px;height:211px;background:#C2C3C9;"></div>
<svg class="a" style="left:531.0px;top:549.025px;" width="9" height="4.95" viewBox="0 0 9 4.95"><path d="M0,0 L9,0 L4.5,4.95 Z" fill="#868999"/></svg>
<svg class="a" style="left:17.25px;top:568.3px;" width="5.5" height="10" viewBox="0 0 5.5 10"><path d="M5.5,0 L5.5,10 L0,5.0 Z" fill="#868999"/></svg>
<div class="a" style="left:30px;top:568px;width:458px;height:11px;background:#C2C3C9;"></div>
<svg class="a" style="left:511.25px;top:568.3px;" width="5.5" height="10" viewBox="0 0 5.5 10"><path d="M0,0 L0,10 L5.5,5.0 Z" fill="#868999"/></svg>
<div class="a" style="left:9px;top:585px;width:538px;height:1px;background:#EBEBEF;"></div>
<div class="t" id="f1" style="left:20.50px;top:594.10px;font-size:17px;color:#1E1E1E;font-weight:bold;transform:scaleX(0.9645);transform-origin:0 0;">Test Detail Summary</div>
<svg class="a" style="left:35.8px;top:622.8px;" width="17.4" height="17.4" viewBox="0 0 17.4 17.4"><g transform="scale(1.0235)"><circle cx="8.5" cy="8.5" r="8.5" fill="#339933"/><path d="M4.2,8.8 L7.3,12 L12.8,5" fill="none" stroke="#fff" stroke-width="2.3" stroke-linecap="round" stroke-linejoin="round"/></g></svg>
<div class="t" id="f2" style="left:64.00px;top:623.05px;font-size:16px;color:#1E1E1E;transform:scaleX(0.9775);transform-origin:0 0;">TestGamerPowerCollection</div>
<svg class="a" style="left:56px;top:650px;" width="13" height="16" viewBox="0 0 13 16"><rect x="0.7" y="0.7" width="11.6" height="14.6" fill="#F5F5F5" stroke="#717171" stroke-width="1.4"/><path d="M3,4 H7 M3,7 H9 M3,10 H9" stroke="#717171" stroke-width="1.2"/></svg>
<div class="t" id="f3" style="left:81.60px;top:650.29px;font-size:15px;color:#1E1E1E;transform:scaleX(1.0580);transform-origin:0 0;">Source:</div>
<div class="a" style="left:148px;top:645px;width:398px;height:25px;overflow:hidden">
<div class="t" style="left:0.00px;top:6.24px;font-size:16px;color:#1C1CB5;font-family:'Liberation Mono',monospace;text-decoration:underline;text-underline-offset:1px;transform:scaleX(0.919);transform-origin:0 0;">S1101ObjectCollectionAssertionEqualAndCompareToOtherClass</div>
</div>
<svg class="a" style="left:53px;top:676px;" width="19" height="19" viewBox="0 0 19 19"><circle cx="9.5" cy="9.5" r="8.2" fill="none" stroke="#717171" stroke-width="1.6"/><path d="M9.5,4 V10 H14" fill="none" stroke="#717171" stroke-width="1.6"/></svg>
<div class="t" id="f4" style="left:81.60px;top:676.89px;font-size:15px;color:#1E1E1E;transform:scaleX(1.1236);transform-origin:0 0;">Duration:</div>
<div class="t" style="left:162.00px;top:677.84px;font-size:16px;color:#1E1E1E;font-family:'Liberation Mono',monospace;transform:scaleX(0.919);transform-origin:0 0;">56 ms</div>
<svg class="a" style="left:28.75px;top:933.0px;" width="5.5" height="10" viewBox="0 0 5.5 10"><path d="M5.5,0 L5.5,10 L0,5.0 Z" fill="#868999"/></svg>
<div class="a" style="left:44px;top:933px;width:337px;height:11px;background:#C2C3C9;"></div>
<svg class="a" style="left:532.25px;top:933.0px;" width="5.5" height="10" viewBox="0 0 5.5 10"><path d="M0,0 L0,10 L5.5,5.0 Z" fill="#868999"/></svg>
<div class="a" style="left:8px;top:949px;width:100px;height:25px;background:#F5F5F5;border:1px solid #CCCEDB;border-top:none;"></div>
<div class="t" style="left:16.00px;top:954.29px;font-size:15px;color:#0E70C0;transform:scaleX(0.96);transform-origin:0 0;">Test Explorer</div>
<div class="t" style="left:113.50px;top:954.29px;font-size:15px;color:#1E1E1E;transform:scaleX(0.96);transform-origin:0 0;">Server Explorer</div>
<div class="t" style="left:228.00px;top:954.29px;font-size:15px;color:#1E1E1E;transform:scaleX(0.96);transform-origin:0 0;">Toolbox</div>
<div class="t" id="f5" style="left:562.00px;top:133.49px;font-size:15px;color:#1E1E1E;transform:scaleX(0.9567);transform-origin:0 0;">S1101ObjectCollect...areToOtherClass.cs</div>
<svg class="a" style="left:839.0px;top:136px;" width="9" height="10" viewBox="0 0 9 10"><rect x="1" y="0" width="7" height="5.2" fill="#6A6A6A"/><rect x="2.5" y="1.5" width="2" height="3" fill="#EEEEF2"/><rect x="0" y="5" width="9" height="1.6" fill="#6A6A6A"/><rect x="3.7" y="6.5" width="1.6" height="3.5" fill="#6A6A6A"/></svg>
<div class="t" id="f6" style="left:890.00px;top:133.49px;font-size:15px;color:#1E1E1E;transform:scaleX(0.9335);transform-origin:0 0;">GamerH.cs</div>
<svg class="a" style="left:975.0px;top:136px;" width="9" height="10" viewBox="0 0 9 10"><rect x="1" y="0" width="7" height="5.2" fill="#6A6A6A"/><rect x="2.5" y="1.5" width="2" height="3" fill="#EEEEF2"/><rect x="0" y="5" width="9" height="1.6" fill="#6A6A6A"/><rect x="3.7" y="6.5" width="1.6" height="3.5" fill="#6A6A6A"/></svg>
<div class="t" id="f7" style="left:1025.00px;top:133.49px;font-size:15px;color:#1E1E1E;transform:scaleX(0.9661);transform-origin:0 0;">GamerHComparer.cs</div>
<svg class="a" style="left:1175.5px;top:136px;" width="9" height="10" viewBox="0 0 9 10"><rect x="1" y="0" width="7" height="5.2" fill="#6A6A6A"/><rect x="2.5" y="1.5" width="2" height="3" fill="#EEEEF2"/><rect x="0" y="5" width="9" height="1.6" fill="#6A6A6A"/><rect x="3.7" y="6.5" width="1.6" height="3.5" fill="#6A6A6A"/></svg>
<div class="t" id="f8" style="left:1226.00px;top:133.49px;font-size:15px;color:#1E1E1E;transform:scaleX(0.9370);transform-origin:0 0;">GamerPowerH.cs</div>
<svg class="a" style="left:1351.0px;top:136px;" width="9" height="10" viewBox="0 0 9 10"><rect x="1" y="0" width="7" height="5.2" fill="#6A6A6A"/><rect x="2.5" y="1.5" width="2" height="3" fill="#EEEEF2"/><rect x="0" y="5" width="9" height="1.6" fill="#6A6A6A"/><rect x="3.7" y="6.5" width="1.6" height="3.5" fill="#6A6A6A"/></svg>
<div class="t" id="f9" style="left:1401.00px;top:133.49px;font-size:15px;color:#1E1E1E;transform:scaleX(0.9581);transform-origin:0 0;">GamerPowerHComparer.cs</div>
<svg class="a" style="left:1592.0px;top:136px;" width="9" height="10" viewBox="0 0 9 10"><rect x="1" y="0" width="7" height="5.2" fill="#6A6A6A"/><rect x="2.5" y="1.5" width="2" height="3" fill="#EEEEF2"/><rect x="0" y="5" width="9" height="1.6" fill="#6A6A6A"/><rect x="3.7" y="6.5" width="1.6" height="3.5" fill="#6A6A6A"/></svg>
<div class="t" id="f10" style="left:1642.00px;top:133.49px;font-size:15px;color:#1E1E1E;transform:scaleX(0.9582);transform-origin:0 0;">GamerMagicPowerH.cs</div>
<svg class="a" style="left:1808.0px;top:136px;" width="9" height="10" viewBox="0 0 9 10"><rect x="1" y="0" width="7" height="5.2" fill="#6A6A6A"/><rect x="2.5" y="1.5" width="2" height="3" fill="#EEEEF2"/><rect x="0" y="5" width="9" height="1.6" fill="#6A6A6A"/><rect x="3.7" y="6.5" width="1.6" height="3.5" fill="#6A6A6A"/></svg>
<svg class="a" style="left:1867.5px;top:167.525px;" width="9" height="4.95" viewBox="0 0 9 4.95"><path d="M0,0 L9,0 L4.5,4.95 Z" fill="#717171"/></svg>
<div class="a" style="left:556px;top:156px;width:326px;height:25px;background:#007ACC;"></div>
<div class="t" id="f11" style="left:561.00px;top:162.29px;font-size:15px;color:#FFFFFF;transform:scaleX(0.9576);transform-origin:0 0;">S1101ObjectCollect...areToOtherClass.cs</div>
<svg class="a" style="left:838px;top:164px;" width="12" height="10" viewBox="0 0 12 10"><path d="M0,5 H4 M4,1.5 V8.5 M4,2 H11 V8 H4 M4,5.5 H10" fill="none" stroke="#fff" stroke-width="1.2"/><rect x="4" y="2" width="6.5" height="3" fill="#fff"/></svg>
<svg class="a" style="left:862px;top:164px;" width="12" height="11" viewBox="0 0 12 11"><path d="M0.8,0.8 L11.2,10.2 M11.2,0.8 L0.8,10.2" stroke="#fff" stroke-width="1.5"/></svg>
<div class="a" style="left:556px;top:181px;width:1324px;height:2px;background:#007ACC;"></div>
<div class="a" style="left:556px;top:183px;width:1324px;height:27px;background:#FFFFFF;border-bottom:2px solid #CCCEDB;"></div>
<svg class="a" style="left:562px;top:187px;" width="18" height="17" viewBox="0 0 18 17"><path d="M0.5,0.5 H17.5 V16.5 H13 M0.5,0.5 V4" fill="none" stroke="#424242" stroke-width="1.2"/><rect x="0.5" y="0.5" width="17" height="3" fill="#424242"/><path d="M4,5 H9 M5,5 V9 L1,15.5 Q1,16.5 2,16.5 H12 Q13,16.5 13,15.5 L9,9 V5" fill="#388A34" stroke="#388A34" stroke-width="1"/></svg>
<div class="t" style="left:582.00px;top:189.29px;font-size:15px;color:#1E1E1E;transform:scaleX(0.96);transform-origin:0 0;">OnlineGame.MSTest</div>
<svg class="a" style="left:983.0px;top:194.3px;" width="8" height="4.4" viewBox="0 0 8 4.4"><path d="M0,0 L8,0 L4.0,4.4 Z" fill="#717171"/></svg>
<div class="a" style="left:994px;top:183px;width:6px;height:26px;background:#CCCEDB;"></div>
<svg class="a" style="left:1004px;top:187px;" width="18" height="18" viewBox="0 0 18 18"><path d="M4.5,0.5 L8.5,4.5 L4.5,8.5 L0.5,4.5 Z" fill="#D28C1E"/><path d="M13.5,5 L17,8.5 L13.5,12 L10,8.5 Z M13.5,10.5 L17,14 L13.5,17.5 L10,14 Z" fill="#D28C1E"/><path d="M6.5,7 L10,8.5 M7,8 V14 H10" fill="none" stroke="#424242" stroke-width="1.2"/></svg>
<div class="t" id="f12" style="left:1025.50px;top:189.29px;font-size:15px;color:#1E1E1E;transform:scaleX(0.9705);transform-origin:0 0;">OnlineGame.MSTest.S1101ObjectCollectionAssertionEqualA</div>
<svg class="a" style="left:1426.0px;top:194.3px;" width="8" height="4.4" viewBox="0 0 8 4.4"><path d="M0,0 L8,0 L4.0,4.4 Z" fill="#717171"/></svg>
<div class="a" style="left:1438px;top:183px;width:5px;height:26px;background:#CCCEDB;"></div>
<svg class="a" style="left:1445px;top:189px;" width="14" height="15" viewBox="0 0 14 15"><path d="M7,0.8 L13,4 V11 L7,14.2 L1,11 V4 Z M1,4 L7,7.3 L13,4 M7,7.3 V14.2" fill="none" stroke="#8E6FC8" stroke-width="1.3"/></svg>
<div class="t" style="left:1468.00px;top:189.29px;font-size:15px;color:#717171;transform:scaleX(0.96);transform-origin:0 0;">TestInitialize()</div>
<svg class="a" style="left:1867.0px;top:194.3px;" width="8" height="4.4" viewBox="0 0 8 4.4"><path d="M0,0 L8,0 L4.0,4.4 Z" fill="#717171"/></svg>
<div class="a" style="left:556px;top:209px;width:1290px;height:743px;background:#FFFFFF;"></div>
<div class="a" style="left:556px;top:209px;width:25px;height:743px;background:#E6E7E8;"></div>
<div class="a" style="left:662px;top:209px;width:7px;height:743px;background:#5FD35F;"></div>
<div class="a" style="left:679px;top:209px;width:2px;height:743px;background:#A5A5A5;"></div>
<div class="a" style="left:692px;top:209px;width:1px;height:743px;background:repeating-linear-gradient(to bottom,#C4C4C4 0 4px,transparent 4px 8px);"></div>
<div class="a" style="left:734px;top:209px;width:1px;height:743px;background:repeating-linear-gradient(to bottom,#C4C4C4 0 4px,transparent 4px 8px);"></div>
<div class="a" style="left:775px;top:209px;width:1px;height:743px;background:repeating-linear-gradient(to bottom,#C4C4C4 0 4px,transparent 4px 8px);"></div>
<div class="a" style="left:556px;top:209px;width:1290px;height:741px;overflow:hidden">
<div class="code" style="left:0;width:102.2px;top:3.00px;text-align:right;color:#2B91AF;transform-origin:100% 0">459
460
461
462
463
464
465
466
467
468
469

470

471

472
473

474

475
476

477

478
479

480</div>
<div class="code" style="left:257px;top:3.00px"><span class="cm">//_powerMagicList1 and _powerMagicList1V2 are in the same order</span>
<span class="cm">//_powerMagicList1 and _powerMagicList3 are in the different order</span>
<span class="cm">//_powerMagicList1 does not contain _powerMagicList4</span>
<span class="cm">//_powerMagicList1 contain _powerMagicList5 in order</span>
<span class="cm">//_powerMagicList6ContainNull contain null value</span>
<span class="cm">//_powerMagicList7NullValue is null value</span>
<span class="cm">//_powerMagicList8NotUnique is not a unique list</span>
<span class="cm">//_powerMagicList9Descend is a unique list with descending order.</span>
<span class="cm">//_powerMagicList10Empty is Empty collection</span>
<span class="cm">//_powerMagicList11All2 contain all the same value item.</span>
_powerMagicList1 = <span class="kw">new</span> <span class="ty">List</span>&lt;<span class="ty">GamerMagicPowerH</span>&gt; { _gamerMagicPower1, _gamerMagicPower2,
  _gamerMagicPower3, _gamerMagicPower4 }; <span class="cm">//1, 2, 3, 4</span>
_powerMagicList1V2 = <span class="kw">new</span> <span class="ty">List</span>&lt;<span class="ty">GamerMagicPowerH</span>&gt; { _gamerMagicPower1V2, _gamerMagicPower2V2,
  _gamerMagicPower3V2, _gamerMagicPower4V2 }; <span class="cm">//1V2, 2V2, 3V2, 4V2</span>
_powerMagicList3 = <span class="kw">new</span> <span class="ty">List</span>&lt;<span class="ty">GamerMagicPowerH</span>&gt; { _gamerMagicPower2V2, _gamerMagicPower1V2,
  _gamerMagicPower3V2, _gamerMagicPower4V2 }; <span class="cm">//2V2, 1V2, 3V2, 4V2</span>
_powerMagicList4 = <span class="kw">new</span> <span class="ty">List</span>&lt;<span class="ty">GamerMagicPowerH</span>&gt; { _gamerMagicPower5V2 }; <span class="cm">//5V2</span>
_powerMagicList5 = <span class="kw">new</span> <span class="ty">List</span>&lt;<span class="ty">GamerMagicPowerH</span>&gt; { _gamerMagicPower2V2,
  _gamerMagicPower3V2 }; <span class="cm">//2V2, 3V2</span>
_powerMagicList6ContainNull = <span class="kw">new</span> <span class="ty">List</span>&lt;<span class="ty">GamerMagicPowerH</span>&gt; { _gamerMagicPower2V2,
  _gamerMagicPower3V2, <span class="kw">null</span> }; <span class="cm">//2V2, 3V2, null</span>
_powerMagicList7NullValue = <span class="kw">null</span>; <span class="cm">//null</span>
_powerMagicList8NotUnique = <span class="kw">new</span> <span class="ty">List</span>&lt;<span class="ty">GamerMagicPowerH</span>&gt; { _gamerMagicPower1V2,
  _gamerMagicPower2V2, _gamerMagicPower2, _gamerMagicPower4V2 }; <span class="cm">//1V2, 2V2, 2, 4V2</span>
_powerMagicList9Descend = <span class="kw">new</span> <span class="ty">List</span>&lt;<span class="ty">GamerMagicPowerH</span>&gt; { _gamerMagicPower4V2, _gamerMagicPower3V2,
  _gamerMagicPower2V2, _gamerMagicPower1V2 }; <span class="cm">//4V2, 3V2, 2V2, 1V2  ************</span>
_powerMagicList10Empty = <span class="kw">new</span> <span class="ty">List</span>&lt;<span class="ty">GamerMagicPowerH</span>&gt; <span class="gr">{ }</span>; <span class="cm">//Empty Collection</span>
_powerMagicList11All2 = <span class="kw">new</span> <span class="ty">List</span>&lt;<span class="ty">GamerMagicPowerH</span>&gt; { _gamerMagicPower2V2, _gamerMagicPower2,
  _gamerMagicPower2V2, _gamerMagicPower2 }; <span class="cm">//2V2, 2, 2V2, 2</span>
_powerMagicList12Fist2 = <span class="kw">new</span> <span class="ty">List</span>&lt;<span class="ty">GamerMagicPowerH</span>&gt; { _gamerMagicPower1,</div>
</div>
<svg class="a" style="left:1832px;top:467.072px;" width="13" height="12" viewBox="0 0 13 12"><path d="M1,2.5 C6,0.5 12,1 12,4.5 C12,7.5 8,8 5,8" fill="none" stroke="#2B91AF" stroke-width="2"/><path d="M6.5,4.5 L2,8.2 L6.5,11.5 Z" fill="#2B91AF"/></svg>
<svg class="a" style="left:1832px;top:516.8px;" width="13" height="12" viewBox="0 0 13 12"><path d="M1,2.5 C6,0.5 12,1 12,4.5 C12,7.5 8,8 5,8" fill="none" stroke="#2B91AF" stroke-width="2"/><path d="M6.5,4.5 L2,8.2 L6.5,11.5 Z" fill="#2B91AF"/></svg>
<svg class="a" style="left:1832px;top:566.528px;" width="13" height="12" viewBox="0 0 13 12"><path d="M1,2.5 C6,0.5 12,1 12,4.5 C12,7.5 8,8 5,8" fill="none" stroke="#2B91AF" stroke-width="2"/><path d="M6.5,4.5 L2,8.2 L6.5,11.5 Z" fill="#2B91AF"/></svg>
<svg class="a" style="left:1832px;top:641.12px;" width="13" height="12" viewBox="0 0 13 12"><path d="M1,2.5 C6,0.5 12,1 12,4.5 C12,7.5 8,8 5,8" fill="none" stroke="#2B91AF" stroke-width="2"/><path d="M6.5,4.5 L2,8.2 L6.5,11.5 Z" fill="#2B91AF"/></svg>
<svg class="a" style="left:1832px;top:690.848px;" width="13" height="12" viewBox="0 0 13 12"><path d="M1,2.5 C6,0.5 12,1 12,4.5 C12,7.5 8,8 5,8" fill="none" stroke="#2B91AF" stroke-width="2"/><path d="M6.5,4.5 L2,8.2 L6.5,11.5 Z" fill="#2B91AF"/></svg>
<svg class="a" style="left:1832px;top:765.44px;" width="13" height="12" viewBox="0 0 13 12"><path d="M1,2.5 C6,0.5 12,1 12,4.5 C12,7.5 8,8 5,8" fill="none" stroke="#2B91AF" stroke-width="2"/><path d="M6.5,4.5 L2,8.2 L6.5,11.5 Z" fill="#2B91AF"/></svg>
<svg class="a" style="left:1832px;top:815.168px;" width="13" height="12" viewBox="0 0 13 12"><path d="M1,2.5 C6,0.5 12,1 12,4.5 C12,7.5 8,8 5,8" fill="none" stroke="#2B91AF" stroke-width="2"/><path d="M6.5,4.5 L2,8.2 L6.5,11.5 Z" fill="#2B91AF"/></svg>
<svg class="a" style="left:1832px;top:889.76px;" width="13" height="12" viewBox="0 0 13 12"><path d="M1,2.5 C6,0.5 12,1 12,4.5 C12,7.5 8,8 5,8" fill="none" stroke="#2B91AF" stroke-width="2"/><path d="M6.5,4.5 L2,8.2 L6.5,11.5 Z" fill="#2B91AF"/></svg>
<svg class="a" style="left:1832px;top:939.488px;" width="13" height="12" viewBox="0 0 13 12"><path d="M1,2.5 C6,0.5 12,1 12,4.5 C12,7.5 8,8 5,8" fill="none" stroke="#2B91AF" stroke-width="2"/><path d="M6.5,4.5 L2,8.2 L6.5,11.5 Z" fill="#2B91AF"/></svg>
<svg class="a" style="left:1443px;top:463px;" width="9" height="18" viewBox="0 0 9 18"><path d="M1,1 H3.5 Q4.5,1 4.5,2 V16 Q4.5,17 3.5,17 H1 M8,1 H5.5 Q4.5,1 4.5,2 M8,17 H5.5 Q4.5,17 4.5,16" fill="none" stroke="#1E1E1E" stroke-width="1.1"/></svg>
<div class="a" style="left:1846px;top:209px;width:34px;height:743px;background:#F5F5F5;"></div>
<div class="a" style="left:1846px;top:209px;width:34px;height:24px;background:#F0F0F0;border-bottom:1px solid #E0E0E0;"></div>
<svg class="a" style="left:1855px;top:213px;" width="15" height="17" viewBox="0 0 15 17"><path d="M0,7.5 H15 M0,9.5 H15" stroke="#1E1E1E" stroke-width="1.3"/><path d="M7.5,0.5 V6 M7.5,11 V16.5" stroke="#1E1E1E" stroke-width="1.3"/><path d="M4.5,3.5 L7.5,0.5 L10.5,3.5 M4.5,13.5 L7.5,16.5 L10.5,13.5" fill="none" stroke="#1E1E1E" stroke-width="1.3"/></svg>
<svg class="a" style="left:1855px;top:234px;" width="14" height="14" viewBox="0 0 14 14"><circle cx="7" cy="7" r="6.5" fill="#E51400"/><rect x="3" y="5.8" width="8" height="2.6" fill="#fff"/></svg>
<svg class="a" style="left:1858.0px;top:258.525px;" width="9" height="4.95" viewBox="0 0 9 4.95"><path d="M0,4.95 L9,4.95 L4.5,0 Z" fill="#868999"/></svg>
<div class="a" style="left:1847px;top:341px;width:5px;height:561px;background:#5FD35F;"></div>
<div class="a" style="left:1868px;top:336px;width:12px;height:2px;background:#F0A30A;"></div>
<div class="a" style="left:1868px;top:344px;width:12px;height:2px;background:#F0A30A;"></div>
<div class="a" style="left:1867px;top:347.5px;width:13px;height:2px;background:#E51400;"></div>
<div class="a" style="left:1861px;top:341px;width:6px;height:3.5px;background:#A0A0A0;"></div>
<div class="a" style="left:1861px;top:344.5px;width:6px;height:7.5px;background:#E51400;"></div>
<div class="a" style="left:1852px;top:640px;width:23px;height:60px;background:#C2C3C9;"></div>
<div class="a" style="left:1868px;top:621px;width:12px;height:2px;background:#F0A30A;"></div>
<div class="a" style="left:1868px;top:690px;width:12px;height:2px;background:#F0A30A;"></div>
<div class="a" style="left:1868px;top:750px;width:12px;height:2px;background:#F0A30A;"></div>
<div class="a" style="left:1862px;top:762px;width:5px;height:7px;background:#E51400;"></div>
<div class="a" style="left:1867px;top:764px;width:13px;height:2px;background:#E51400;"></div>
<div class="a" style="left:1861px;top:769px;width:6px;height:128px;background:#A0A0A0;"></div>
<div class="a" style="left:1868px;top:771px;width:12px;height:126px;background:repeating-linear-gradient(to bottom,#109A10 0 3px,#D9F2D9 3px 4px);"></div>
<div class="a" style="left:1847px;top:897px;width:33px;height:3px;background:#0000C8;"></div>
<svg class="a" style="left:1858.0px;top:937.525px;" width="9" height="4.95" viewBox="0 0 9 4.95"><path d="M0,0 L9,0 L4.5,4.95 Z" fill="#868999"/></svg>
<div class="a" style="left:1880px;top:183px;width:1px;height:791px;background:#CCCEDB;"></div>
<div class="a" style="left:555px;top:183px;width:1px;height:791px;background:#CCCEDB;"></div>
<div class="a" style="left:556px;top:952px;width:1324px;height:22px;background:#F5F5F5;border-bottom:1px solid #CCCEDB;"></div>
<div class="a" style="left:556px;top:952px;width:75px;height:21px;background:#FFFFFF;border-right:1px solid #CCCEDB;"></div>
<div class="t" style="left:560.50px;top:955.72px;font-size:14.5px;color:#1E1E1E;transform:scaleX(0.96);transform-origin:0 0;">117 %</div>
<svg class="a" style="left:619.5px;top:960.3px;" width="8" height="4.4" viewBox="0 0 8 4.4"><path d="M0,0 L8,0 L4.0,4.4 Z" fill="#717171"/></svg>
<svg class="a" style="left:664.0px;top:955.0px;" width="15.0" height="15.0" viewBox="0 0 15.0 15.0"><g transform="scale(0.8824)"><circle cx="8.5" cy="8.5" r="8.5" fill="#E51400"/><path d="M5,5 L12,12 M12,5 L5,12" stroke="#fff" stroke-width="2.4" stroke-linecap="round"/></g></svg>
<div class="t" style="left:684.50px;top:955.72px;font-size:14.5px;color:#1E1E1E;transform:scaleX(0.96);transform-origin:0 0;">4</div>
<svg class="a" style="left:721px;top:954px;" width="16" height="15" viewBox="0 0 16 15"><path d="M8,0.5 L15.5,14.5 H0.5 Z" fill="#F8D12B"/><rect x="7" y="4.5" width="2" height="6" fill="#1E1E1E"/><rect x="7" y="11.5" width="2" height="2" fill="#1E1E1E"/></svg>
<div class="t" style="left:742.00px;top:955.72px;font-size:14.5px;color:#1E1E1E;transform:scaleX(0.96);transform-origin:0 0;">0</div>
<svg class="a" style="left:791px;top:957px;" width="13" height="11" viewBox="0 0 13 11"><path d="M12,5.5 H2 M6,1 L1.5,5.5 L6,10" fill="none" stroke="#1C63B7" stroke-width="2.2"/></svg>
<svg class="a" style="left:826px;top:957px;" width="13" height="11" viewBox="0 0 13 11"><path d="M1,5.5 H11 M7,1 L11.5,5.5 L7,10" fill="none" stroke="#1C63B7" stroke-width="2.2"/></svg>
<div class="a" style="left:860px;top:954px;width:1px;height:18px;background:#CCCEDB;"></div>
<svg class="a" style="left:878px;top:954px;" width="15" height="16" viewBox="0 0 15 16"><path d="M9,1 L14,6 M4,7 L9,3 L12,6 L8,11 Z" fill="#717171" stroke="#717171" stroke-width="1.3"/><path d="M4,7 L8,11 L3,15 L1,13 Z" fill="#B4B4B4"/></svg>
<svg class="a" style="left:899.5px;top:960.3px;" width="8" height="4.4" viewBox="0 0 8 4.4"><path d="M0,0 L8,0 L4.0,4.4 Z" fill="#1E1E1E"/></svg>
<div class="a" style="left:1912px;top:130px;width:8px;height:123px;background:#CCCEDB;"></div>
<div class="t" style="left:1890px;top:130px;font-size:15px;color:#1E1E1E;writing-mode:vertical-rl;transform:scaleY(0.96);transform-origin:0 0;">Unit Test Coverage</div>
<div class="a" style="left:1912px;top:268px;width:8px;height:67px;background:#CCCEDB;"></div>
<div class="t" style="left:1890px;top:268px;font-size:15px;color:#1E1E1E;writing-mode:vertical-rl;transform:scaleY(0.96);transform-origin:0 0;">Properties</div>
<div class="a" style="left:1912px;top:350px;width:8px;height:115px;background:#CCCEDB;"></div>
<div class="t" style="left:1890px;top:350px;font-size:15px;color:#1E1E1E;writing-mode:vertical-rl;transform:scaleY(0.96);transform-origin:0 0;">Solution Explorer</div>
<div class="a" style="left:1912px;top:480px;width:8px;height:94px;background:#CCCEDB;"></div>
<div class="t" style="left:1890px;top:480px;font-size:15px;color:#1E1E1E;writing-mode:vertical-rl;transform:scaleY(0.96);transform-origin:0 0;">Team Explorer</div>
<div class="t" style="left:8.20px;top:984.79px;font-size:15px;color:#1E1E1E;transform:scaleX(0.96);transform-origin:0 0;">Package Manager Console</div>
<div class="a" style="left:8px;top:1005px;width:174px;height:8px;background:#CCCEDB;"></div>
<div class="t" style="left:196.80px;top:984.79px;font-size:15px;color:#1E1E1E;transform:scaleX(0.96);transform-origin:0 0;">Output</div>
<div class="a" style="left:197px;top:1005px;width:46px;height:8px;background:#CCCEDB;"></div>
<div class="t" style="left:258.00px;top:984.79px;font-size:15px;color:#1E1E1E;transform:scaleX(0.96);transform-origin:0 0;">Error List ...</div>
<div class="a" style="left:258px;top:1005px;width:71px;height:8px;background:#CCCEDB;"></div>
<div class="a" style="left:0px;top:1013px;width:1920px;height:27px;background:#007ACC;"></div>
<svg class="a" style="left:5px;top:1021px;" width="20" height="15" viewBox="0 0 20 15"><path d="M4,1 H19 L16,14 H1 Z" fill="none" stroke="#fff" stroke-width="1.4"/><path d="M5,4.5 H11" stroke="#fff" stroke-width="1.4"/></svg>
<div class="t" style="left:35.00px;top:1021.29px;font-size:15px;color:#FFFFFF;transform:scaleX(0.96);transform-origin:0 0;">Item(s) Saved</div>
<div class="t" id="f13" style="left:718.60px;top:1021.29px;font-size:15px;color:#FFFFFF;transform:scaleX(0.9370);transform-origin:0 0;">Ln 617</div>
<div class="t" id="f14" style="left:833.50px;top:1021.29px;font-size:15px;color:#FFFFFF;transform:scaleX(0.9456);transform-origin:0 0;">Col 59</div>
<div class="t" id="f15" style="left:947.00px;top:1021.29px;font-size:15px;color:#FFFFFF;transform:scaleX(0.9243);transform-origin:0 0;">Ch 59</div>
<div class="t" id="f16" style="left:1117.00px;top:1021.29px;font-size:15px;color:#FFFFFF;transform:scaleX(0.9074);transform-origin:0 0;">INS</div>
<svg class="a" style="left:1208px;top:1020px;" width="12" height="15" viewBox="0 0 12 15"><path d="M6,14.5 V2 M1,6.5 L6,1.5 L11,6.5" fill="none" stroke="#fff" stroke-width="2"/></svg>
<div class="t" style="left:1232.00px;top:1021.29px;font-size:15px;color:#FFFFFF;transform:scaleX(0.96);transform-origin:0 0;">1</div>
<svg class="a" style="left:1270px;top:1021px;" width="14" height="14" viewBox="0 0 14 14"><path d="M2,12 L1,13 L1.5,10 L10,1.5 L12.5,4 L4,12.5 Z" fill="#fff"/></svg>
<div class="t" style="left:1293.00px;top:1021.29px;font-size:15px;color:#FFFFFF;transform:scaleX(0.96);transform-origin:0 0;">2</div>
<svg class="a" style="left:1329px;top:1019px;" width="19" height="19" viewBox="0 0 19 19"><path d="M9.5,1 L18,9.5 L9.5,18 L1,9.5 Z" fill="#fff"/><circle cx="7" cy="7.5" r="1.6" fill="#007ACC"/><circle cx="11.5" cy="12" r="1.6" fill="#007ACC"/><path d="M7,7.5 L11.5,12 M7,7.5 V13" stroke="#007ACC" stroke-width="1.3"/></svg>
<div class="t" id="f17" style="left:1356.50px;top:1021.29px;font-size:15px;color:#FFFFFF;transform:scaleX(0.8560);transform-origin:0 0;">KL01</div>
<svg class="a" style="left:1415px;top:1019px;" width="19" height="19" viewBox="0 0 19 19"><path d="M3,3 L9.5,10 L16,3 M9.5,10 V17" fill="none" stroke="#fff" stroke-width="2.2"/><circle cx="3" cy="3" r="2.2" fill="#fff"/><circle cx="16" cy="3" r="2.2" fill="#fff"/><circle cx="9.5" cy="17" r="1.8" fill="#fff"/></svg>
<div class="t" id="f18" style="left:1441.50px;top:1021.29px;font-size:15px;color:#FFFFFF;transform:scaleX(0.9468);transform-origin:0 0;">KL/04B_NUnit_KL/00_Main</div>
<svg class="a" style="left:1624.5px;top:1025.525px;" width="9" height="4.95" viewBox="0 0 9 4.95"><path d="M0,4.95 L9,4.95 L4.5,0 Z" fill="#FFFFFF"/></svg>
<svg class="a" style="left:1666px;top:1019px;" width="18" height="18" viewBox="0 0 18 18"><path d="M3,13 C4,11 4,8 4.5,6 C5,3.5 7,2 9,2 C11,2 13,3.5 13.5,6 C14,8 14,11 15,13 Z" fill="#fff"/><path d="M7.5,14.5 Q9,16.5 10.5,14.5" fill="#fff"/></svg>
<svg class="a" style="left:1676px;top:1025px;" width="15" height="15" viewBox="0 0 15 15"><circle cx="7.5" cy="7.5" r="7.5" fill="#E51400"/><text x="7.5" y="11.8" text-anchor="middle" font-family="Liberation Sans" font-size="11.5" fill="#fff">4</text></svg>
<svg class="a" style="left:1718px;top:1019px;" width="18" height="18" viewBox="0 0 18 18"><path d="M3,5 H14 L12,16 H1 Z" fill="none" stroke="#F2C811" stroke-width="1.5"/><path d="M9,1 L7,11 M9,1 L11,1.5 L9,11.5" stroke="#F2C811" stroke-width="1.6" fill="#F2C811"/></svg>
<svg class="a" style="left:1756px;top:1018px;" width="22" height="22" viewBox="0 0 22 22"><circle cx="10" cy="10" r="9" fill="none" stroke="#fff" stroke-width="1.6"/><circle cx="17" cy="17" r="4.5" fill="#fff"/><path d="M17,14 A3,3 0 0 1 17,20 Z" fill="#424242"/></svg>
<div class="t" style="left:1783.00px;top:1021.29px;font-size:15px;color:#D3E6F5;transform:scaleX(0.96);transform-origin:0 0;">2 errors in 1 file</div>
<svg class="a" style="left:1893px;top:1016px;" width="23" height="23" viewBox="0 0 23 23"><circle cx="11.5" cy="11.5" r="11" fill="#fff"/><circle cx="11.5" cy="11.5" r="9.3" fill="#E51400"/><rect x="5.5" y="9.8" width="12" height="3.4" fill="#fff"/></svg></body></html>
